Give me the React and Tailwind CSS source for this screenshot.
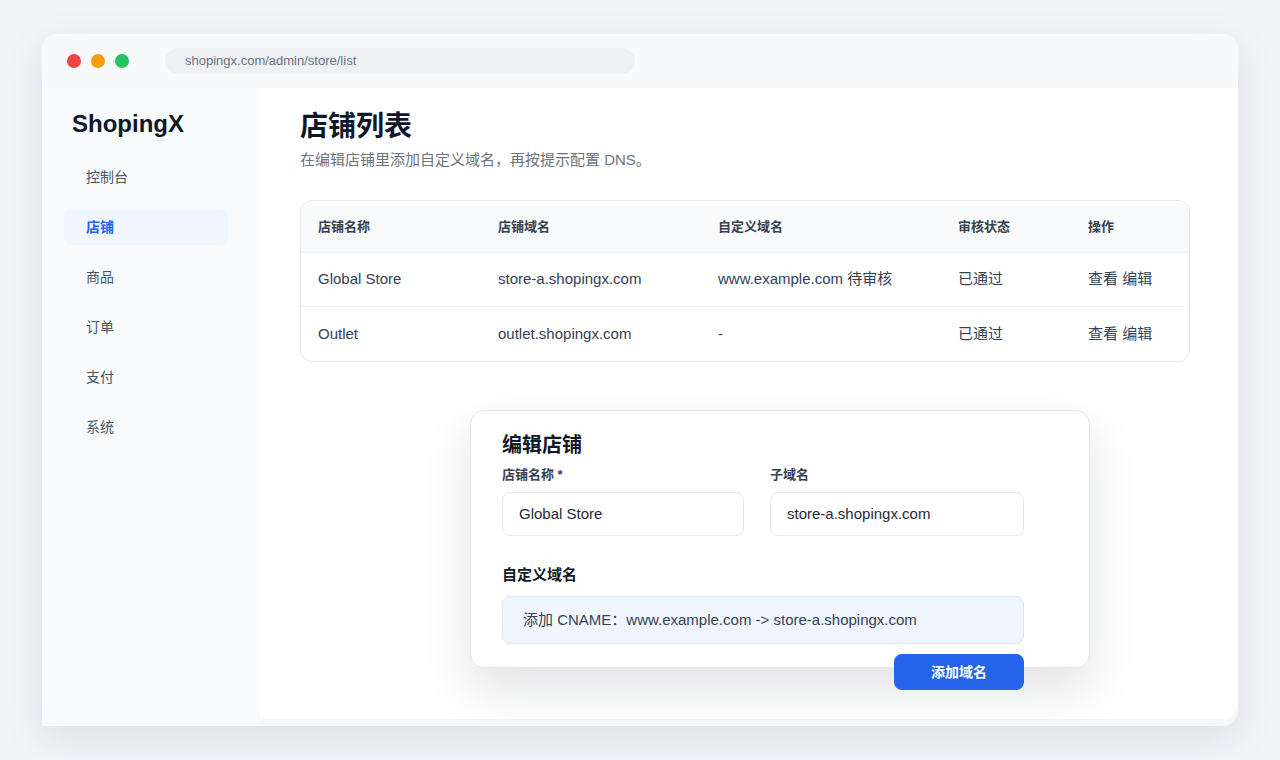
const NAV_ITEMS = ['控制台', '店铺', '商品', '订单', '支付', '系统'];

const STORES = [
  { name: 'Global Store', domain: 'store-a.shopingx.com', custom: 'www.example.com 待审核', status: '已通过' },
  { name: 'Outlet', domain: 'outlet.shopingx.com', custom: '-', status: '已通过' },
];

const COLS = ['w-[180px]', 'w-[220px]', 'w-[240px]', 'w-[130px]', 'flex-1'];

export default function App() {
  return (
    <div
      className="h-[760px] w-[1280px] overflow-hidden bg-[#f3f4f8] pt-[34px] pl-[42px]"
      style={{ fontFamily: '"Liberation Sans", "Noto Sans CJK SC", sans-serif' }}
    >
      {/* Browser window */}
      <div className="flex h-[692px] w-[1196px] flex-col overflow-hidden rounded-t-2xl rounded-br-2xl bg-[#f6f7fa] shadow-[0_12px_40px_rgba(30,41,59,0.10)]">
        {/* Top bar */}
        <div className="flex h-[54px] shrink-0 items-center bg-[#f8f9fb] pl-[25px]">
          <div className="flex gap-[10px]">
            <span className="h-[14px] w-[14px] rounded-full bg-[#ef4444]"></span>
            <span className="h-[14px] w-[14px] rounded-full bg-[#f59e0b]"></span>
            <span className="h-[14px] w-[14px] rounded-full bg-[#22c55e]"></span>
          </div>
          <div className="ml-[36px] flex h-[26px] w-[470px] items-center rounded-full bg-[#eef0f4] pl-[20px] text-[13px] text-[#6b7280]">
            shopingx.com/admin/store/list
          </div>
        </div>

        <div className="flex flex-1">
          {/* Sidebar */}
          <aside className="w-[218px] shrink-0 bg-[#f8fafc] px-[22px] pt-[22px]">
            <div className="pl-[8px] text-[24px] font-bold leading-[28px] text-[#0f172a]">ShopingX</div>
            <nav className="mt-[21px] flex flex-col gap-[14px]">
              {NAV_ITEMS.map((item) => (
                <div
                  key={item}
                  className={
                    item === '店铺'
                      ? 'flex h-[36px] w-[164px] items-center rounded-lg bg-[#eff6ff] pl-[22px] text-[14px] font-semibold text-[#2563eb]'
                      : 'flex h-[36px] w-[164px] items-center rounded-lg pl-[22px] text-[14px] text-[#4b5563]'
                  }
                >
                  {item}
                </div>
              ))}
            </nav>
          </aside>

          {/* Main */}
          <main className="h-[631px] flex-1 rounded-br-2xl bg-white pl-[40px] pt-[22px]">
            <h1 className="text-[28px] font-bold leading-[34px] text-[#0f172a]">店铺列表</h1>
            <p className="mt-[6px] text-[15px] leading-[20px] text-[#6b7280]">在编辑店铺里添加自定义域名，再按提示配置 DNS。</p>

            {/* Table */}
            <div className="mt-[30px] w-[890px] overflow-hidden rounded-xl border border-[#e5e7eb]">
              <div className="flex h-[52px] items-center border-b border-[#eef0f4] bg-[#f8fafc] text-[13px] font-semibold text-[#374151]">
                {['店铺名称', '店铺域名', '自定义域名', '审核状态', '操作'].map((h, i) => (
                  <div key={h} className={`${COLS[i]} pl-[17px]`}>{h}</div>
                ))}
              </div>
              {STORES.map((s, idx) => (
                <div
                  key={s.name}
                  className={`flex h-[54px] items-center text-[15px] text-[#334155] ${idx === 0 ? 'border-b border-[#eef0f4]' : ''}`}
                >
                  <div className={`${COLS[0]} pl-[17px]`}>{s.name}</div>
                  <div className={`${COLS[1]} pl-[17px]`}>{s.domain}</div>
                  <div className={`${COLS[2]} pl-[17px]`}>{s.custom}</div>
                  <div className={`${COLS[3]} pl-[17px]`}>{s.status}</div>
                  <div className={`${COLS[4]} pl-[17px]`}>查看 编辑</div>
                </div>
              ))}
            </div>

            {/* Edit dialog */}
            <div className="ml-[170px] mt-[48px] h-[258px] w-[620px] rounded-[14px] border border-[#e5e7eb] bg-white pl-[31px] pt-[20px] shadow-[0_22px_50px_rgba(15,23,42,0.12)]">
              <h2 className="text-[20px] font-bold leading-[28px] text-[#111827]">编辑店铺</h2>
              <div className="mt-[7px] flex gap-[26px]">
                <div>
                  <label className="block text-[13px] font-semibold leading-[18px] text-[#374151]">店铺名称 *</label>
                  <div className="mt-[8px] flex h-[44px] w-[242px] items-center rounded-lg border border-[#e5e7eb] pl-[16px] text-[15px] text-[#1f2937]">
                    Global Store
                  </div>
                </div>
                <div>
                  <label className="block text-[13px] font-semibold leading-[18px] text-[#374151]">子域名</label>
                  <div className="mt-[8px] flex h-[44px] w-[254px] items-center rounded-lg border border-[#e5e7eb] pl-[16px] text-[15px] text-[#1f2937]">
                    store-a.shopingx.com
                  </div>
                </div>
              </div>
              <div className="mt-[28px] text-[15px] font-semibold leading-[22px] text-[#111827]">自定义域名</div>
              <div className="mt-[10px] flex h-[48px] w-[522px] items-center rounded-lg border border-[#d6e6fb] bg-[#eff6ff] pl-[20px] text-[15px] text-[#374151]">
                添加 CNAME：www.example.com -&gt; store-a.shopingx.com
              </div>
              <div className="mt-[10px] flex w-[522px] justify-end">
                <button className="flex h-[36px] w-[130px] items-center justify-center rounded-lg bg-[#2563eb] text-[14px] font-semibold text-white">
                  添加域名
                </button>
              </div>
            </div>
          </main>
        </div>
      </div>
    </div>
  );
}
